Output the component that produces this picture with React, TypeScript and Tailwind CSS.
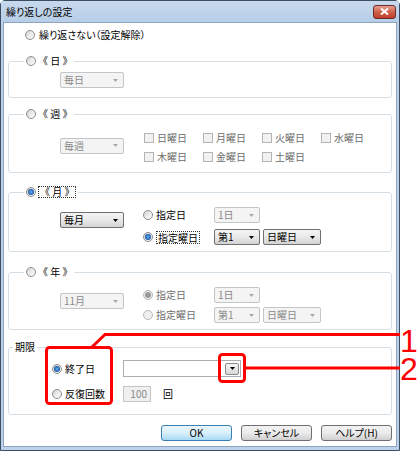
import React from "react";

type RadioProps = { checked?: boolean; disabled?: boolean };

function Radio({ checked, disabled }: RadioProps) {
  return (
    <span
      className={
        "relative inline-flex h-[10px] w-[10px] shrink-0 items-center justify-center rounded-full border " +
        (disabled
          ? "border-[#b8b8b8] bg-[#efefef]"
          : "border-[#8e8f8f] bg-linear-to-br from-[#cfcfcf] via-[#ececec] to-[#fafafa]")
      }
    >
      {checked && (
        <span
          className={
            "h-[6px] w-[6px] rounded-full " +
            (disabled ? "bg-[#9a9a9a]" : "bg-radial from-[#6fb4f0] via-[#2a6cc0] to-[#0c3870]")
          }
        />
      )}
    </span>
  );
}

function Checkbox({ label }: { label: string }) {
  return (
    <div className="flex h-[12px] items-center gap-[3px] text-[#6d6d6d]">
      <span className="h-[10px] w-[10px] shrink-0 border border-[#b4b4b4] bg-[#f1f1f1]" />
      <span>{label}</span>
    </div>
  );
}

function Arrow({ color }: { color: string }) {
  return (
    <svg width="5" height="3" viewBox="0 0 5 3" className="shrink-0">
      <path d="M0 0h5L2.5 3z" fill={color} />
    </svg>
  );
}

type ComboProps = { label: string; w: string; disabled?: boolean; className?: string };

function Combo({ label, w, disabled, className = "" }: ComboProps) {
  if (disabled) {
    return (
      <div
        className={`flex h-[16px] ${w} shrink-0 items-center justify-between rounded-[2px] border border-[#c2c6c9] bg-[#f4f4f4] pl-[3px] pr-[5px] text-[#8a8a8a] ${className}`}
      >
        <span>{label}</span>
        <Arrow color="#a8a8a8" />
      </div>
    );
  }
  return (
    <div
      className={`flex h-[16px] ${w} shrink-0 items-center justify-between rounded-[2px] border border-[#707070] bg-linear-to-b from-[#f4f4f4] via-[#e9e9e9] to-[#d3d3d3] pl-[3px] pr-[5px] ${className}`}
    >
      <span>{label}</span>
      <Arrow color="#000" />
    </div>
  );
}

function Button({ children, primary }: { children: React.ReactNode; primary?: boolean }) {
  return (
    <button
      className={
        "flex h-[16px] w-[71px] items-center justify-center rounded-[3px] border text-[10px] leading-[12px] " +
        (primary
          ? "border-[#3c7fb1] bg-linear-to-b from-[#eaf6fd] via-[#d9f0fc] to-[#a7d9f5]"
          : "border-[#707070] bg-linear-to-b from-[#f2f2f2] via-[#ebebeb] to-[#cfcfcf]")
      }
    >
      {children}
    </button>
  );
}

function Legend({ children, checked, focus }: { children: React.ReactNode; checked?: boolean; focus?: boolean }) {
  return (
    <legend className="ml-[15px] px-[2px] [font-feature-settings:normal]">
      <span className="flex h-[12px] items-center gap-[2px]">
        <Radio checked={checked} />
        <span className={focus ? "border border-dotted border-[#333] px-[1px] leading-[10px]" : ""}>{children}</span>
      </span>
    </legend>
  );
}

const groupCls = "mx-[4px] rounded-[3px] border border-[#d5dfe5]";

export default function App() {
  return (
    <div className="relative h-[451px] w-[418px] bg-white font-['Noto_Sans_CJK_JP',sans-serif] text-[10px] leading-[12px] text-black [font-feature-settings:'palt']">
      <div className="flex h-[451px] w-[400px] flex-col rounded-t-[5px] border border-[#3a4d63] bg-[#bcd2ea]">
        {/* title bar */}
        <div className="flex h-[21px] shrink-0 items-center justify-between bg-linear-to-b from-[#c7d9ed] to-[#b7cee8] pl-[5px] pr-[3px]">
          <span className="text-[10px]">繰り返しの設定</span>
          <div className="flex h-[14px] w-[23px] items-center justify-center rounded-[3px] border border-[#6d2a26] bg-linear-to-b from-[#e3a090] via-[#cf6048] to-[#c0402c]">
            <svg width="9" height="7" viewBox="0 0 9 7">
              <path d="M1 0.5l7 6M8 0.5l-7 6" stroke="#fff" strokeWidth="2" />
            </svg>
          </div>
        </div>

        {/* client area */}
        <div className="mx-[2px] mb-[3px] flex flex-1 flex-col border border-[#8ea4bd] bg-white">
          <div className="mt-[6px] flex h-[12px] items-center gap-[4px] pl-[21px]">
            <Radio />
            <span>繰り返さない（設定解除）</span>
          </div>

          {/* daily */}
          <fieldset className={`${groupCls} mt-[14px]`}>
            <Legend>《 日 》</Legend>
            <div className="pb-[9px] pl-[51px] pt-[5px]">
              <Combo label="毎日" w="w-[64px]" disabled />
            </div>
          </fieldset>

          {/* weekly */}
          <fieldset className={`${groupCls} mt-[10px]`}>
            <Legend>《 週 》</Legend>
            <div className="flex items-center pb-[9px] pl-[51px] pt-[12px]">
              <Combo label="毎週" w="w-[64px]" disabled className="mt-[-4px]" />
              <div className="ml-[20px] grid grid-cols-[59px_59px_59px_59px] gap-y-[7px]">
                {["日曜日", "月曜日", "火曜日", "水曜日", "木曜日", "金曜日", "土曜日"].map((d) => (
                  <Checkbox key={d} label={d} />
                ))}
              </div>
            </div>
          </fieldset>

          {/* monthly */}
          <fieldset className={`${groupCls} mt-[13px]`}>
            <Legend checked focus>
              《 月 》
            </Legend>
            <div className="flex items-start pb-[6px] pl-[51px] pt-[9px]">
              <Combo label="毎月" w="w-[64px]" className="mt-[5px]" />
              <div className="ml-[19px] flex w-[71px] flex-col gap-[6px]">
                <div className="flex h-[16px] items-center gap-[3px]">
                  <Radio />
                  <span>指定日</span>
                </div>
                <div className="flex h-[16px] items-center gap-[3px]">
                  <Radio checked />
                  <span className="border border-dotted border-[#333] px-[1px] leading-[11px]">指定曜日</span>
                </div>
              </div>
              <div className="flex flex-col gap-[6px]">
                <Combo label="1日" w="w-[46px]" disabled />
                <div className="flex gap-[3px]">
                  <Combo label="第1" w="w-[46px]" />
                  <Combo label="日曜日" w="w-[58px]" />
                </div>
              </div>
            </div>
          </fieldset>

          {/* yearly */}
          <fieldset className={`${groupCls} mt-[14px]`}>
            <Legend>《 年 》</Legend>
            <div className="flex items-start pb-[6px] pl-[51px] pt-[9px]">
              <Combo label="11月" w="w-[64px]" disabled className="mt-[6px]" />
              <div className="ml-[19px] flex w-[71px] flex-col gap-[4px] text-[#6d6d6d]">
                <div className="flex h-[16px] items-center gap-[3px]">
                  <Radio checked disabled />
                  <span>指定日</span>
                </div>
                <div className="flex h-[16px] items-center gap-[3px]">
                  <Radio disabled />
                  <span>指定曜日</span>
                </div>
              </div>
              <div className="flex flex-col gap-[4px]">
                <Combo label="1日" w="w-[46px]" disabled />
                <div className="flex gap-[3px]">
                  <Combo label="第1" w="w-[46px]" disabled />
                  <Combo label="日曜日" w="w-[58px]" disabled />
                </div>
              </div>
            </div>
          </fieldset>

          {/* period */}
          <fieldset className={`${groupCls} mt-[11px]`}>
            <legend className="ml-[4px] px-[2px]">
              <span className="flex h-[12px] items-center">期限</span>
            </legend>
            <div className="flex flex-col gap-[9px] pb-[12px] pl-[43px] pt-[7px]">
              <div className="flex h-[17px] items-center">
                <div className="flex w-[71px] items-center gap-[3px]">
                  <Radio checked />
                  <span>終了日</span>
                </div>
                <div className="flex h-[17px] w-[118px] items-center justify-end border border-[#abadb3] bg-white pr-[1px]">
                  <div className="flex h-[12px] w-[14px] items-center justify-center rounded-[2px] border border-[#8a8a8a] bg-linear-to-b from-[#f6f6f6] to-[#d8d8d8]">
                    <Arrow color="#000" />
                  </div>
                </div>
              </div>
              <div className="flex h-[16px] items-center">
                <div className="flex w-[71px] items-center gap-[3px]">
                  <Radio />
                  <span>反復回数</span>
                </div>
                <div className="flex h-[16px] w-[28px] items-center justify-end border border-[#c2c6c9] bg-[#f0f0f0] pr-[3px] text-[#8a8a8a]">
                  100
                </div>
                <span className="ml-[12px]">回</span>
              </div>
            </div>
          </fieldset>

          <div className="mt-[10px] flex justify-end gap-[9px] pr-[4px]">
            <Button primary>OK</Button>
            <Button>キャンセル</Button>
            <Button>ヘルプ(H)</Button>
          </div>
        </div>
      </div>

      {/* callouts */}
      <svg className="pointer-events-none absolute left-0 top-0" width="418" height="451" viewBox="0 0 418 451">
        <rect x="46.5" y="347.5" width="65" height="56" rx="3" fill="none" stroke="#ff0000" strokeWidth="3" />
        <path d="M92 347L105 334.5H400" fill="none" stroke="#ff0000" strokeWidth="3" />
        <rect x="219.5" y="354.5" width="25" height="27" rx="3" fill="none" stroke="#ff0000" strokeWidth="3" />
        <path d="M246 368H400" fill="none" stroke="#ff0000" strokeWidth="3" />
      </svg>
      <span className="absolute left-[400px] top-[329px] font-['Liberation_Sans',sans-serif] text-[32px] leading-[24px] text-[#ff0000]">
        1
      </span>
      <span className="absolute left-[400px] top-[357px] font-['Liberation_Sans',sans-serif] text-[32px] leading-[24px] text-[#ff0000]">
        2
      </span>
    </div>
  );
}
